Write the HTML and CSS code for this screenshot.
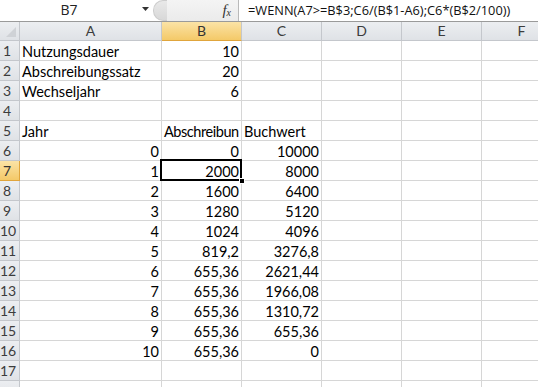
FILE: index.html
```html
<!DOCTYPE html>
<html lang="de">
  <head>
    <meta charset="UTF-8" />
    <meta name="viewport" content="width=device-width, initial-scale=1.0" />
    <title>Abschreibung</title>
    <link rel="stylesheet" href="styles.css">
  </head>

  <body>
    <!-- formula bar -->
    <div class="formula-bar">
      <div class="name-box">B7</div>
      <div class="name-arrow">
        <svg width="7" height="4" viewBox="0 0 7 4"><path d="M0 0H7L3.5 4Z" fill="#333" /></svg>
      </div>
      <div class="grip"></div>
      <div class="fx-zone"><span class="fx">f<sub>x</sub></span></div>
      <div class="formula">=WENN(A7&gt;=B$3;C6/(B$1-A6);C6*(B$2/100))</div>
    </div>

    <!-- sheet -->
    <div class="sheet">
      <div class="row head">
        <div class="corner"></div>
        <div class="col-head">A</div>
        <div class="col-head active">B</div>
        <div class="col-head">C</div>
        <div class="col-head">D</div>
        <div class="col-head">E</div>
        <div class="col-head">F</div>
      </div>

      <div class="row">
        <div class="row-head">1</div>
        <div class="cell">Nutzungsdauer</div>
        <div class="cell num">10</div>
        <div class="cell"></div><div class="cell"></div><div class="cell"></div><div class="cell"></div>
      </div>
      <div class="row">
        <div class="row-head">2</div>
        <div class="cell">Abschreibungssatz</div>
        <div class="cell num">20</div>
        <div class="cell"></div><div class="cell"></div><div class="cell"></div><div class="cell"></div>
      </div>
      <div class="row">
        <div class="row-head">3</div>
        <div class="cell">Wechseljahr</div>
        <div class="cell num">6</div>
        <div class="cell"></div><div class="cell"></div><div class="cell"></div><div class="cell"></div>
      </div>
      <div class="row">
        <div class="row-head">4</div>
        <div class="cell"></div><div class="cell"></div><div class="cell"></div>
        <div class="cell"></div><div class="cell"></div><div class="cell"></div>
      </div>
      <div class="row">
        <div class="row-head">5</div>
        <div class="cell">Jahr</div>
        <div class="cell tight">Abschreibun</div>
        <div class="cell">Buchwert</div>
        <div class="cell"></div><div class="cell"></div><div class="cell"></div>
      </div>
      <div class="row">
        <div class="row-head">6</div>
        <div class="cell num">0</div>
        <div class="cell num">0</div>
        <div class="cell num">10000</div>
        <div class="cell"></div><div class="cell"></div><div class="cell"></div>
      </div>
      <div class="row">
        <div class="row-head active">7</div>
        <div class="cell num">1</div>
        <div class="cell num selected">2000<span class="handle"></span></div>
        <div class="cell num">8000</div>
        <div class="cell"></div><div class="cell"></div><div class="cell"></div>
      </div>
      <div class="row">
        <div class="row-head">8</div>
        <div class="cell num">2</div>
        <div class="cell num">1600</div>
        <div class="cell num">6400</div>
        <div class="cell"></div><div class="cell"></div><div class="cell"></div>
      </div>
      <div class="row">
        <div class="row-head">9</div>
        <div class="cell num">3</div>
        <div class="cell num">1280</div>
        <div class="cell num">5120</div>
        <div class="cell"></div><div class="cell"></div><div class="cell"></div>
      </div>
      <div class="row">
        <div class="row-head">10</div>
        <div class="cell num">4</div>
        <div class="cell num">1024</div>
        <div class="cell num">4096</div>
        <div class="cell"></div><div class="cell"></div><div class="cell"></div>
      </div>
      <div class="row">
        <div class="row-head">11</div>
        <div class="cell num">5</div>
        <div class="cell num">819,2</div>
        <div class="cell num">3276,8</div>
        <div class="cell"></div><div class="cell"></div><div class="cell"></div>
      </div>
      <div class="row">
        <div class="row-head">12</div>
        <div class="cell num">6</div>
        <div class="cell num">655,36</div>
        <div class="cell num">2621,44</div>
        <div class="cell"></div><div class="cell"></div><div class="cell"></div>
      </div>
      <div class="row">
        <div class="row-head">13</div>
        <div class="cell num">7</div>
        <div class="cell num">655,36</div>
        <div class="cell num">1966,08</div>
        <div class="cell"></div><div class="cell"></div><div class="cell"></div>
      </div>
      <div class="row">
        <div class="row-head">14</div>
        <div class="cell num">8</div>
        <div class="cell num">655,36</div>
        <div class="cell num">1310,72</div>
        <div class="cell"></div><div class="cell"></div><div class="cell"></div>
      </div>
      <div class="row">
        <div class="row-head">15</div>
        <div class="cell num">9</div>
        <div class="cell num">655,36</div>
        <div class="cell num">655,36</div>
        <div class="cell"></div><div class="cell"></div><div class="cell"></div>
      </div>
      <div class="row">
        <div class="row-head">16</div>
        <div class="cell num">10</div>
        <div class="cell num">655,36</div>
        <div class="cell num">0</div>
        <div class="cell"></div><div class="cell"></div><div class="cell"></div>
      </div>
      <div class="row">
        <div class="row-head">17</div>
        <div class="cell"></div><div class="cell"></div><div class="cell"></div>
        <div class="cell"></div><div class="cell"></div><div class="cell"></div>
      </div>
      <div class="row">
        <div class="row-head"></div>
        <div class="cell"></div><div class="cell"></div><div class="cell"></div>
        <div class="cell"></div><div class="cell"></div><div class="cell"></div>
      </div>
    </div>
  </body>
</html>
```

FILE: styles.css
```css
* {
  box-sizing: border-box;
}

body {
  margin: 0;
  width: 538px;
  height: 387px;
  overflow: hidden;
  background: white;
  font-family: Lato, "Open Sans", sans-serif;
}

/* formula bar */

.formula-bar {
  display: flex;
  height: 22px;
  border-bottom: 1px solid #9a9a9a;
  background: white;
}

.name-box {
  width: 138px;
  text-align: center;
  font-family: "Open Sans", sans-serif;
  font-size: 14px;
  line-height: 20px;
  color: #222;
}

.name-arrow {
  width: 15px;
  display: flex;
  align-items: center;
  justify-content: center;
  padding-bottom: 3px;
}

.grip {
  width: 14px;
  height: 21px;
  border-radius: 10px 0 0 10px;
  background: linear-gradient(#e9e9e9, #d8d8d8);
  border: 1px solid #cdcdcd;
  border-right: none;
}

.fx-zone {
  width: 72px;
  background: linear-gradient(#f4f4f4, #ebebeb);
  border-right: 1px solid #b9b9b9;
  display: flex;
  justify-content: flex-end;
  padding-right: 7px;
}

.fx {
  font-family: "Liberation Serif", serif;
  font-style: italic;
  font-size: 15px;
  line-height: 20px;
  color: #333;
}

.fx sub {
  font-size: 10px;
  vertical-align: -1px;
}

.formula {
  padding-left: 9px;
  font-family: "Open Sans", sans-serif;
  font-size: 12.8px;
  line-height: 20px;
  white-space: nowrap;
  color: #111;
}

/* grid */

.row {
  display: grid;
  grid-template-columns: 20px 142px 80px 80px 80px 80px 80px;
  height: 20px;
}

.head {
  height: 19px;
}

.corner,
.col-head,
.row-head {
  background: linear-gradient(#eceef1, #dfe2e6);
  color: #3c3c3c;
  font-size: 14px;
  line-height: 18px;
  border-right: 1px solid #c4c7cc;
  border-bottom: 1px solid #c4c7cc;
}

.corner {
  position: relative;
}

.corner::after {
  content: "";
  position: absolute;
  right: 3px;
  bottom: 3px;
  border-left: 10px solid transparent;
  border-bottom: 10px solid #cfd2d6;
}

.col-head {
  text-align: center;
}

.row-head {
  padding-right: 5px;
  padding-top: 1px;
  text-align: center;
}

.active {
  background: linear-gradient(#fbe3a6, #f4c968);
  border-bottom-color: #e0a53c;
  color: #333;
}

.row-head.active {
  border-right-color: #e0a53c;
}

.cell {
  border-right: 1px solid #d6d6d6;
  border-bottom: 1px solid #d6d6d6;
  padding: 2px 2px 0;
  font-size: 14.5px;
  line-height: 17px;
  color: #000;
  white-space: nowrap;
}

.num {
  text-align: right;
}

.tight {
  letter-spacing: -0.45px;
  padding-right: 0;
}

.selected {
  position: relative;
}

.selected::before {
  content: "";
  position: absolute;
  left: -2px;
  top: -2px;
  right: -1px;
  bottom: -1px;
  border: 2px solid #000;
}

.handle {
  position: absolute;
  right: -4px;
  bottom: -4px;
  width: 6px;
  height: 6px;
  background: #000;
  border: 1px solid #fff;
}
```
